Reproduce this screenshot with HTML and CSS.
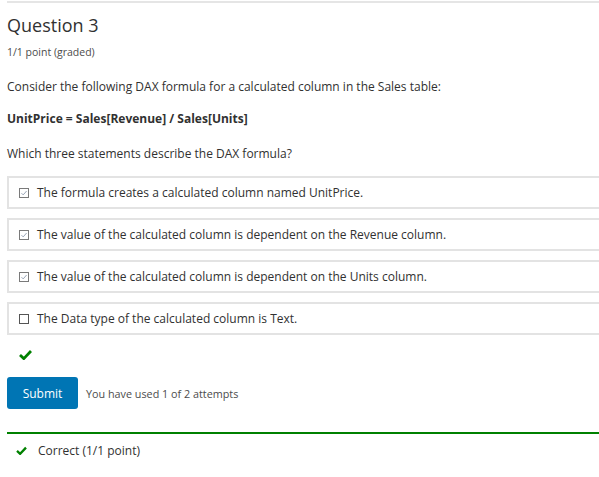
FILE: index.html
```html
<!DOCTYPE html>
<html>
<head>
<meta charset="utf-8">
<link rel="stylesheet" href="styles.css">
</head>
<body>
<div class="problem">
  <h3 class="title">Question 3</h3>
  <div class="meta">1/1 point (graded)</div>
  <p class="para">Consider the following DAX formula for a calculated column in the Sales table:</p>
  <p class="para formula">UnitPrice = Sales[Revenue] / Sales[Units]</p>
  <p class="para which">Which three statements describe the DAX formula?</p>
  <div class="options">
    <div class="option">
      <svg class="box" width="10" height="10" viewBox="0 0 10 10"><rect x="0.5" y="0.5" width="9" height="9" fill="none" stroke="#7a7a7a" stroke-width="1"/><path d="M2.5 5.2 L4.2 6.9 L7.6 3" fill="none" stroke="#9aa6b8" stroke-width="1"/></svg>
      <span>The formula creates a calculated column named UnitPrice.</span>
    </div>
    <div class="option">
      <svg class="box" width="10" height="10" viewBox="0 0 10 10"><rect x="0.5" y="0.5" width="9" height="9" fill="none" stroke="#7a7a7a" stroke-width="1"/><path d="M2.5 5.2 L4.2 6.9 L7.6 3" fill="none" stroke="#9aa6b8" stroke-width="1"/></svg>
      <span>The value of the calculated column is dependent on the Revenue column.</span>
    </div>
    <div class="option">
      <svg class="box" width="10" height="10" viewBox="0 0 10 10"><rect x="0.5" y="0.5" width="9" height="9" fill="none" stroke="#7a7a7a" stroke-width="1"/><path d="M2.5 5.2 L4.2 6.9 L7.6 3" fill="none" stroke="#9aa6b8" stroke-width="1"/></svg>
      <span>The value of the calculated column is dependent on the Units column.</span>
    </div>
    <div class="option">
      <svg class="box" width="10" height="10" viewBox="0 0 10 10"><rect x="0.5" y="0.5" width="9" height="9" fill="none" stroke="#555" stroke-width="1"/></svg>
      <span>The Data type of the calculated column is Text.</span>
    </div>
  </div>
  <div class="status">
    <svg width="13" height="11" viewBox="0 0 13 11"><path d="M1 6 L4.8 9.6 L12 2" fill="none" stroke="#008100" stroke-width="2.8"/></svg>
  </div>
  <div class="actions">
    <button class="submit">Submit</button>
    <span class="attempts">You have used 1 of 2 attempts</span>
  </div>
  <div class="feedback">
    <svg width="11" height="9" viewBox="0 0 13 11"><path d="M1 6 L4.8 9.6 L12 2" fill="none" stroke="#008100" stroke-width="2.8"/></svg>
    <span>Correct (1/1 point)</span>
  </div>
</div>
</body>
</html>
```
FILE: styles.css
```css
html, body {
  margin: 0;
  padding: 0;
  background: #fff;
}
body {
  font-family: "Open Sans", "Noto Sans", sans-serif;
  color: #313131;
}
.problem {
  margin-left: 7px;
  margin-right: -20px;
  border-top: 2px solid #e5e5e5;
  margin-top: 1px;
}
.title {
  margin: 0;
  padding-top: 10px;
  font-size: 18px;
  font-weight: 400;
  line-height: 24px;
  color: #313131;
}
.meta {
  margin-top: 9px;
  font-size: 10.5px;
  line-height: 12px;
  color: #4c4c4c;
}
.para {
  margin: 0;
  margin-top: 20px;
  font-size: 12px;
  line-height: 17px;
}
.formula {
  margin-top: 15px;
  font-weight: 700;
}
.which {
  margin-top: 18px;
}
.options {
  margin-top: 14px;
  display: flex;
  flex-direction: column;
  gap: 9px;
}
.option {
  height: 29px;
  border: 2px solid #e3e3e3;
  display: flex;
  align-items: center;
  padding-left: 10px;
  gap: 8px;
  font-size: 12px;
}
.box {
  flex: none;
}
.status {
  height: 38px;
  display: flex;
  align-items: center;
  padding-left: 12px;
}
.actions {
  margin-top: 4px;
  display: flex;
  align-items: center;
  gap: 8px;
}
.submit {
  width: 71px;
  height: 32px;
  background: #0075b4;
  color: #fff;
  border: none;
  border-radius: 3px;
  font-family: "Open Sans", "Noto Sans", sans-serif;
  font-size: 12px;
  padding: 0;
}
.attempts {
  font-size: 10.8px;
  color: #4c4c4c;
}
.feedback {
  margin-top: 23px;
  border-top: 2px solid #008100;
  height: 32px;
  display: flex;
  align-items: center;
  padding-left: 9px;
  gap: 11px;
  font-size: 12px;
}
```
